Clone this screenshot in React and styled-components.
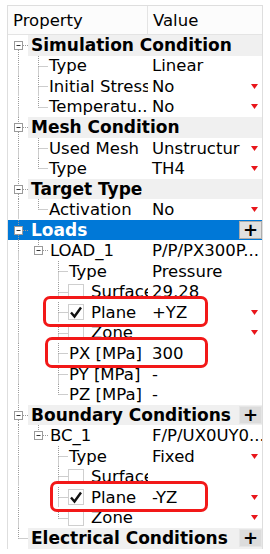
import React from 'react';
import styled, { createGlobalStyle } from 'styled-components';

const H = 20.56;

const GlobalStyle = createGlobalStyle`
  body {
    margin: 0;
    background: #fff;
    font-family: 'DejaVu Sans', Tahoma, sans-serif;
  }
`;

const Panel = styled.div`
  box-sizing: border-box;
  width: 256px;
  margin: 5px 0 0 7px;
  border: 1px solid #dedede;
  border-bottom: none;
  background: #fff;
  font-size: 16.5px;
  color: #000;
`;

const Header = styled.div`
  display: grid;
  grid-template-columns: 140px 1fr;
  height: 28px;
  border-bottom: 1px solid #e4e4e4;
  background: #fcfcfc;
`;

const HeaderCell = styled.div`
  display: flex;
  align-items: center;
  padding-left: 5px;
  border-right: ${p => (p.$divider ? '1px solid #e4e4e4' : 'none')};
`;

const Row = styled.div`
  position: relative;
  display: flex;
  height: ${H}px;
  background: ${p => (p.$selected ? '#0078d7' : 'transparent')};
  color: ${p => (p.$selected ? '#fff' : '#000')};
  z-index: ${p => (p.$mark ? 1 : 'auto')};

  &::before {
    content: '';
    display: ${p => (p.$mark ? 'block' : 'none')};
    position: absolute;
    left: ${p => p.$mark?.left ?? 0}px;
    width: ${p => p.$mark?.width ?? 0}px;
    top: -6px;
    bottom: -4px;
    box-sizing: border-box;
    border: 3px solid #f21818;
    border-radius: 7px;
    background: #fff;
    z-index: -1;
  }
`;

const ItemRow = styled(Row)`
  display: grid;
  grid-template-columns: 140px 1fr;
`;

const PropCell = styled.div`
  display: flex;
  align-items: center;
  overflow: hidden;
  white-space: nowrap;
`;

const ValueCell = styled.div`
  display: flex;
  align-items: center;
  justify-content: space-between;
  padding: 0 4px 0 4px;
  white-space: nowrap;
  overflow: hidden;
`;

const Label = styled.span`
  padding-left: ${p => p.$pad ?? 1}px;
`;

const GroupBar = styled.div`
  flex: 1;
  display: flex;
  align-items: center;
  justify-content: space-between;
  padding-left: 3px;
  background: ${p => (p.$selected ? 'transparent' : '#f0f0f0')};
  font-size: 17px;
  font-weight: bold;
  white-space: nowrap;
`;

const PlusButton = styled.span`
  display: flex;
  align-items: center;
  justify-content: center;
  box-sizing: border-box;
  width: 23px;
  height: 18px;
  background: ${p => (p.$light ? '#e1e1e1' : '#dcdcdc')};
  border: 1px solid ${p => (p.$light ? '#adadad' : '#e6e6e6')};
  color: #000;
  font-size: 18px;
  line-height: 1;
`;

const Check = styled.span`
  display: flex;
  align-items: center;
  justify-content: center;
  box-sizing: border-box;
  flex: none;
  width: 16px;
  height: 16px;
  margin-right: 7px;
  border: 1px solid #cfcfcf;
  background: #fff;
`;

const GuideSvg = styled.svg`
  display: block;
  flex: none;
`;

const dot = { stroke: '#9a9a9a', strokeWidth: 1, strokeDasharray: '1 1' };

const Guide = ({ kind }) => {
  const c = 10.5;
  const m = 10.5;
  const hasBox = kind.startsWith('box');
  const top = kind === 'pipe' || kind === 'tee' || kind === 'end' || kind === 'box' || kind === 'boxEnd';
  const bottom = kind === 'pipe' || kind === 'tee' || kind === 'box' || kind === 'boxFirst';
  const stub = kind === 'tee' || kind === 'end' || hasBox;
  return (
    <GuideSvg width="20" height={H}>
      {top && <line x1={c} y1="0" x2={c} y2={hasBox ? 6 : m} style={dot} />}
      {bottom && <line x1={c} y1={hasBox ? 15 : m} x2={c} y2={H} style={dot} />}
      {stub && <line x1={hasBox ? 15 : c} y1={m} x2="20" y2={m} style={dot} />}
      {hasBox && (
        <g>
          <rect x="6.5" y="6.5" width="8" height="8" fill="#fff" stroke="#9a9a9a" />
          <line x1="8.5" y1="10.5" x2="12.5" y2="10.5" stroke="#333" />
        </g>
      )}
    </GuideSvg>
  );
};

const Triangle = () => (
  <svg width="7" height="5" viewBox="0 0 7 5">
    <path d="M0 0 H7 L3.5 5 Z" fill="#e8161b" />
  </svg>
);

const Tick = () => (
  <svg width="14" height="14" viewBox="0 0 14 14">
    <path d="M2 7.5 L5.5 11.5 L12 2.5" fill="none" stroke="#111" strokeWidth="2.4" />
  </svg>
);

const rows = [
  { group: 'Simulation Condition', guides: ['boxFirst'] },
  { label: 'Type', value: 'Linear', guides: ['pipe', 'tee'] },
  { label: 'Initial Stress', value: 'No', dd: true, guides: ['pipe', 'tee'] },
  { label: 'Temperatu...', value: 'No', dd: true, guides: ['pipe', 'end'] },
  { group: 'Mesh Condition', guides: ['box'] },
  { label: 'Used Mesh', value: 'Unstructur', dd: true, guides: ['pipe', 'tee'] },
  { label: 'Type', value: 'TH4', dd: true, guides: ['pipe', 'end'] },
  { group: 'Target Type', guides: ['box'] },
  { label: 'Activation', value: 'No', dd: true, guides: ['pipe', 'end'] },
  { group: 'Loads', guides: ['box'], selected: true, plus: true },
  { label: 'LOAD_1', value: 'P/P/PX300P...', guides: ['pipe', 'boxEnd'], pad: 2 },
  { label: 'Type', value: 'Pressure', guides: ['pipe', 'blank', 'tee'] },
  { label: 'Surface', value: '29,28', check: false, guides: ['pipe', 'blank', 'tee'] },
  { label: 'Plane', value: '+YZ', check: true, dd: true, guides: ['pipe', 'blank', 'tee'], mark: { left: 35, width: 165 } },
  { label: 'Zone', value: '', check: false, dd: true, guides: ['pipe', 'blank', 'tee'] },
  { label: 'PX [MPa]', value: '300', guides: ['pipe', 'blank', 'tee'], mark: { left: 37, width: 163 } },
  { label: 'PY [MPa]', value: '-', guides: ['pipe', 'blank', 'tee'] },
  { label: 'PZ [MPa]', value: '-', guides: ['pipe', 'blank', 'end'] },
  { group: 'Boundary Conditions', guides: ['box'], plus: true },
  { label: 'BC_1', value: 'F/P/UX0UY0...', guides: ['pipe', 'boxEnd'], pad: 2 },
  { label: 'Type', value: 'Fixed', dd: true, guides: ['pipe', 'blank', 'tee'] },
  { label: 'Surface', value: '', check: false, guides: ['pipe', 'blank', 'tee'] },
  { label: 'Plane', value: '-YZ', check: true, dd: true, guides: ['pipe', 'blank', 'tee'], mark: { left: 42, width: 158 } },
  { label: 'Zone', value: '', check: false, dd: true, guides: ['pipe', 'blank', 'end'] },
  { group: 'Electrical Conditions', guides: ['end'], plus: true },
];

const App = () => (
  <>
    <GlobalStyle />
    <Panel>
      <Header>
        <HeaderCell $divider>Property</HeaderCell>
        <HeaderCell>Value</HeaderCell>
      </Header>
      {rows.map((r, i) =>
        r.group ? (
          <Row key={i} $selected={r.selected}>
            {r.guides.map((g, j) => <Guide key={j} kind={g} />)}
            <GroupBar $selected={r.selected}>
              {r.group}
              {r.plus && <PlusButton $light={r.selected}>+</PlusButton>}
            </GroupBar>
          </Row>
        ) : (
          <ItemRow key={i} $mark={r.mark}>
            <PropCell>
              {r.guides.map((g, j) => <Guide key={j} kind={g} />)}
              {r.check !== undefined && <Check>{r.check && <Tick />}</Check>}
              <Label $pad={r.check !== undefined ? 0 : r.pad}>{r.label}</Label>
            </PropCell>
            <ValueCell>
              <span>{r.value}</span>
              {r.dd && <Triangle />}
            </ValueCell>
          </ItemRow>
        )
      )}
    </Panel>
  </>
);

export default App;
